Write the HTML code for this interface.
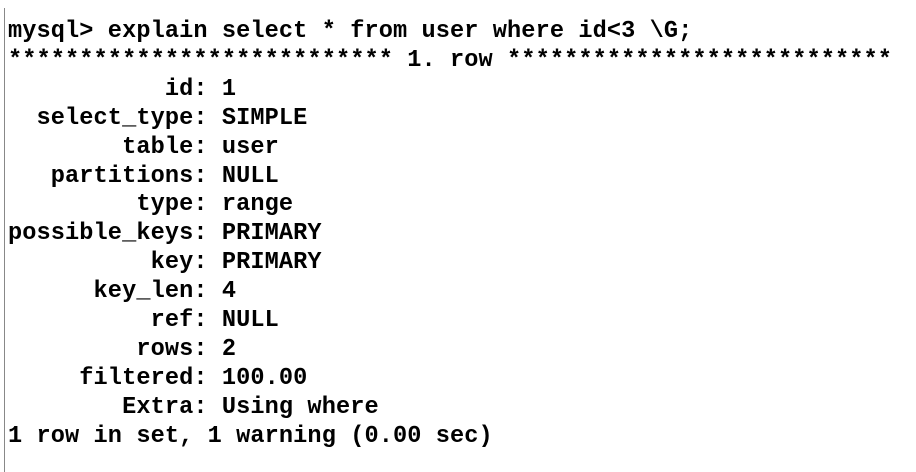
<!DOCTYPE html>
<html><head><meta charset="utf-8"><style>
html,body{margin:0;padding:0;background:#fff;width:916px;height:472px;overflow:hidden}
.bar{position:absolute;left:4px;top:8px;width:1px;height:464px;background:#888}
pre{position:absolute;left:8px;top:18px;margin:0;font-family:"Liberation Mono",monospace;font-weight:bold;font-size:23.6px;letter-spacing:0.1px;line-height:28.9px;color:#000}
</style></head><body>
<div class="bar"></div>
<pre>mysql&gt; explain select * from user where id&lt;3 \G;
*************************** 1. row ***************************
           id: 1
  select_type: SIMPLE
        table: user
   partitions: NULL
         type: range
possible_keys: PRIMARY
          key: PRIMARY
      key_len: 4
          ref: NULL
         rows: 2
     filtered: 100.00
        Extra: Using where
1 row in set, 1 warning (0.00 sec)</pre>
</body></html>
